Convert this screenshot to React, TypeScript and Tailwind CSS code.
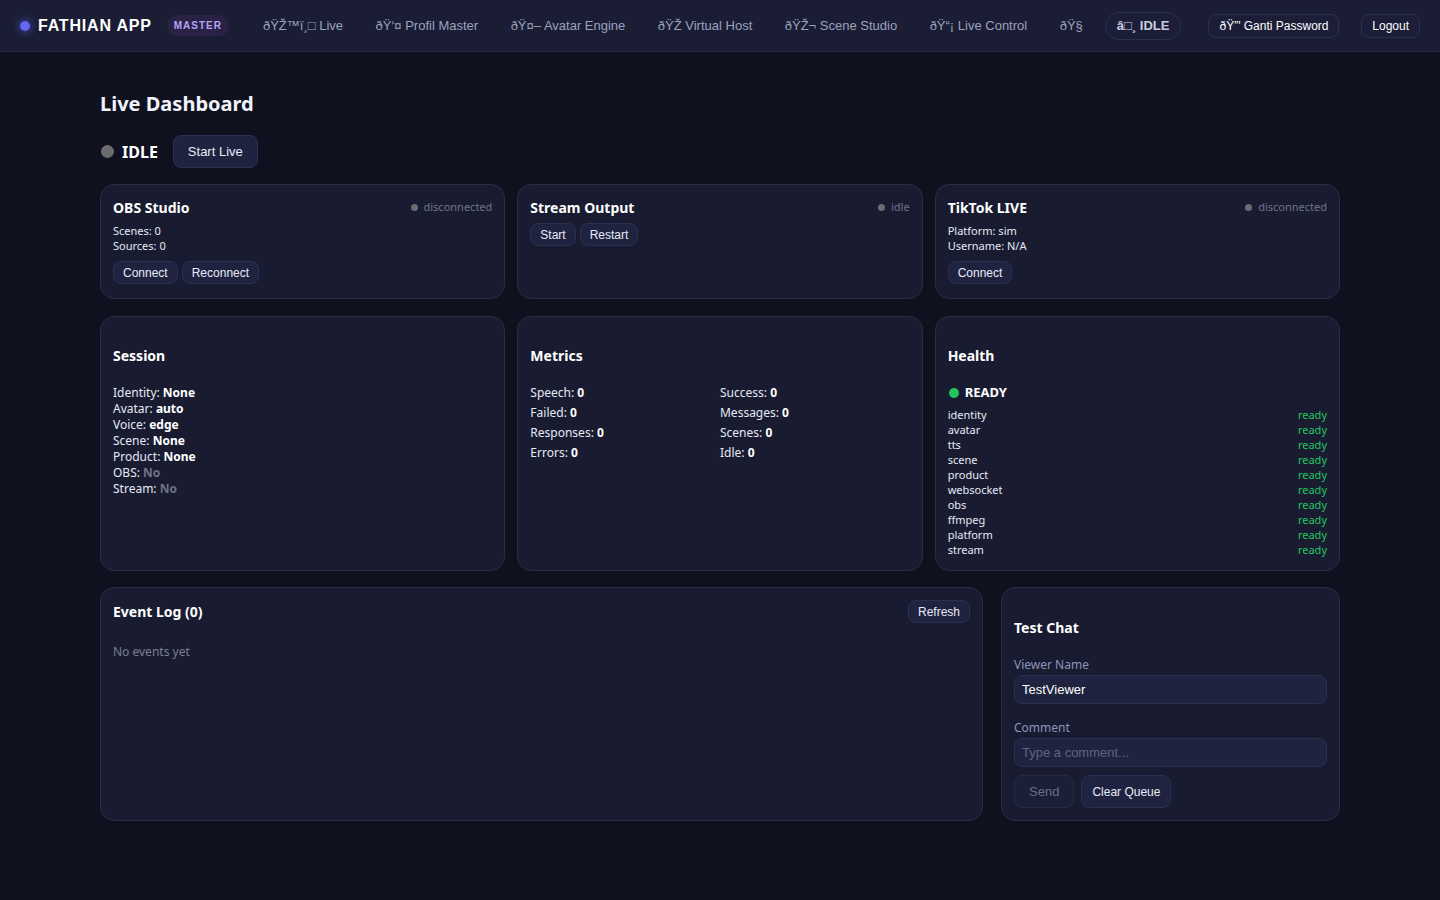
import React from 'react'

const NAV_LINKS = [
  'ðŸŽ™ï¸□ Live',
  'ðŸ‘¤ Profil Master',
  'ðŸ¤– Avatar Engine',
  'ðŸŽ\u00ad Virtual Host',
  'ðŸŽ¬ Scene Studio',
  'ðŸ“¡ Live Control',
  'ðŸ§',
]

const HEALTH = ['identity', 'avatar', 'tts', 'scene', 'product', 'websocket', 'obs', 'ffmpeg', 'platform', 'stream']

const body = { fontFamily: '"Noto Sans", "Open Sans", sans-serif' }
const arial = { fontFamily: '"Liberation Sans", Arial, sans-serif' }

function Btn({ children, className = '' }: { children: React.ReactNode; className?: string }) {
  return (
    <button
      type="button"
      style={arial}
      className={'whitespace-nowrap rounded-lg border border-[#2b3052] bg-[#1f2340] text-[12px] text-[#e8ebf7] ' + className}
    >
      {children}
    </button>
  )
}

function Status({ label }: { label: string }) {
  return (
    <span className="flex items-center gap-[6px] text-[11px] text-[#6f7385]">
      <span className="h-[7px] w-[7px] rounded-full bg-[#6b6b70]" />
      {label}
    </span>
  )
}

function Card({ children, className = '' }: { children: React.ReactNode; className?: string }) {
  return (
    <div className={'rounded-[14px] border border-[#282c48] bg-[#191c31] px-[12px] ' + className}>{children}</div>
  )
}

function Field({ k, v, dim }: { k: string; v: string; dim?: boolean }) {
  return (
    <div className="text-[12px] leading-[16px] text-[#e6e9f5]">
      {k}: <b className={dim ? 'text-[#6f7385]' : 'text-white'}>{v}</b>
    </div>
  )
}

export default function App() {
  return (
    <div style={body} className="min-h-[900px] bg-[#10111f] text-[#e6e9f5]">
      <nav className="flex h-[52px] items-center whitespace-nowrap border-b border-[#262a45] bg-[#1a1d33] pl-[20px] pr-[20px]">
        <div className="flex items-center">
          <span className="h-[10px] w-[10px] rounded-full bg-[#6366f1] shadow-[0_0_8px_2px_rgba(99,102,241,0.45)]" />
          <span style={arial} className="ml-[8px] text-[16px] font-black tracking-[0.8px] text-white">
            FATHIAN APP
          </span>
          <span
            style={arial}
            className="ml-[15px] rounded-full bg-[#2a2244] px-[7px] py-[3px] text-[10px] font-black tracking-[1px] text-[#b4a2f5]"
          >
            MASTER
          </span>
        </div>
        <div style={arial} className="ml-[34px] flex items-center gap-[32.5px] text-[13px] text-[#9ca2bf]">
          {NAV_LINKS.map((l) => (
            <span key={l}>{l}</span>
          ))}
        </div>
        <span
          style={arial}
          className="ml-[22px] flex h-[28px] items-center rounded-full border border-[#2b3052] bg-[#1b1e36] px-[11px] text-[13px] font-bold text-[#c9cde0]"
        >
          â□¸ IDLE
        </span>
        <button
          type="button"
          style={arial}
          className="ml-[27px] h-[24px] rounded-lg border border-[#2b3052] bg-[#1b1e36] px-[10px] text-[12px] text-white"
        >
          ðŸ”' Ganti Password
        </button>
        <button
          type="button"
          style={arial}
          className="ml-auto h-[24px] rounded-lg border border-[#2b3052] bg-[#1b1e36] px-[10px] text-[12px] text-white"
        >
          Logout
        </button>
      </nav>

      <main className="mx-auto w-[1240px] pt-[38px]">
        <h1 className="text-[20px] font-bold leading-[28px] text-[#f1f3fb]">Live Dashboard</h1>

        <div className="mt-[17px] flex items-center">
          <span className="ml-[1px] h-[13px] w-[13px] rounded-full bg-[#6b6b70]" />
          <span className="ml-[8px] text-[16px] font-bold text-white">IDLE</span>
          <Btn className="ml-[15px] h-[33px] px-[14px] text-[13px]">Start Live</Btn>
        </div>

        <div className="mt-[16px] grid grid-cols-3 gap-[12px]">
          <Card className="h-[115px] pt-[12px]">
            <div className="flex items-center justify-between">
              <h3 className="text-[14px] font-bold text-white">OBS Studio</h3>
              <Status label="disconnected" />
            </div>
            <div className="mt-[5px] text-[11px] leading-[15px]">
              <div>Scenes: 0</div>
              <div>Sources: 0</div>
            </div>
            <div className="mt-[8px] flex gap-[4px]">
              <Btn className="h-[23px] px-[9px]">Connect</Btn>
              <Btn className="h-[23px] px-[9px]">Reconnect</Btn>
            </div>
          </Card>
          <Card className="h-[115px] pt-[12px]">
            <div className="flex items-center justify-between">
              <h3 className="text-[14px] font-bold text-white">Stream Output</h3>
              <Status label="idle" />
            </div>
            <div className="mt-[5px] flex gap-[4px]">
              <Btn className="h-[23px] px-[9px]">Start</Btn>
              <Btn className="h-[23px] px-[9px]">Restart</Btn>
            </div>
          </Card>
          <Card className="h-[115px] pt-[12px]">
            <div className="flex items-center justify-between">
              <h3 className="text-[14px] font-bold text-white">TikTok LIVE</h3>
              <Status label="disconnected" />
            </div>
            <div className="mt-[5px] text-[11px] leading-[15px]">
              <div>Platform: sim</div>
              <div>Username: N/A</div>
            </div>
            <div className="mt-[8px] flex gap-[4px]">
              <Btn className="h-[23px] px-[9px]">Connect</Btn>
            </div>
          </Card>
        </div>

        <div className="mt-[17px] grid grid-cols-3 gap-[12px]">
          <Card className="h-[255px] pt-[29px]">
            <h3 className="text-[14px] font-bold leading-[20px] text-white">Session</h3>
            <div className="mt-[19px]">
              <Field k="Identity" v="None" />
              <Field k="Avatar" v="auto" />
              <Field k="Voice" v="edge" />
              <Field k="Scene" v="None" />
              <Field k="Product" v="None" />
              <Field k="OBS" v="No" dim />
              <Field k="Stream" v="No" dim />
            </div>
          </Card>
          <Card className="h-[255px] pt-[29px]">
            <h3 className="text-[14px] font-bold leading-[20px] text-white">Metrics</h3>
            <div className="mt-[19px] grid grid-cols-2 gap-y-[4px]">
              <Field k="Speech" v="0" />
              <Field k="Success" v="0" />
              <Field k="Failed" v="0" />
              <Field k="Messages" v="0" />
              <Field k="Responses" v="0" />
              <Field k="Scenes" v="0" />
              <Field k="Errors" v="0" />
              <Field k="Idle" v="0" />
            </div>
          </Card>
          <Card className="h-[255px] pt-[29px]">
            <h3 className="text-[14px] font-bold leading-[20px] text-white">Health</h3>
            <div className="mt-[17px] flex items-center">
              <span className="ml-[1px] h-[10px] w-[10px] rounded-full bg-[#22c55e]" />
              <span className="ml-[6px] text-[13px] font-bold text-white">READY</span>
            </div>
            <div className="mt-[4px] text-[11px] leading-[15px]">
              {HEALTH.map((h) => (
                <div key={h} className="flex justify-between">
                  <span>{h}</span>
                  <span className="text-[#22c55e]">ready</span>
                </div>
              ))}
            </div>
          </Card>
        </div>

        <div className="mt-[16px] grid grid-cols-[883px_339px] gap-[18px]">
          <Card className="h-[234px] pt-[12px]">
            <div className="flex items-center justify-between">
              <h3 className="text-[14px] font-bold text-white">Event Log (0)</h3>
              <Btn className="h-[23px] px-[9px]">Refresh</Btn>
            </div>
            <div className="mt-[20px] text-[12px] text-[#7b7f92]">No events yet</div>
          </Card>
          <Card className="h-[234px] pt-[30px]">
            <h3 className="text-[14px] font-bold leading-[20px] text-white">Test Chat</h3>
            <div className="mt-[18px] text-[12px] text-[#8d95b8]">Viewer Name</div>
            <input
              readOnly
              value="TestViewer"
              style={arial}
              className="mt-[1px] h-[29px] w-full rounded-lg border border-[#2b3052] bg-[#1f2340] px-[7px] text-[13px] text-white outline-none"
            />
            <div className="mt-[15px] text-[12px] text-[#8d95b8]">Comment</div>
            <input
              readOnly
              placeholder="Type a comment..."
              style={arial}
              className="mt-[1px] h-[29px] w-full rounded-lg border border-[#2b3052] bg-[#1f2340] px-[7px] text-[13px] text-white outline-none placeholder:text-[#5f6480]"
            />
            <div className="mt-[8px] flex gap-[7px]">
              <button
                type="button"
                style={arial}
                className="h-[33px] rounded-lg border border-[#252944] bg-[#1c1f38] px-[14px] text-[13px] text-[#6b7088]"
              >
                Send
              </button>
              <Btn className="h-[33px] px-[10px]">Clear Queue</Btn>
            </div>
          </Card>
        </div>
      </main>
    </div>
  )
}
